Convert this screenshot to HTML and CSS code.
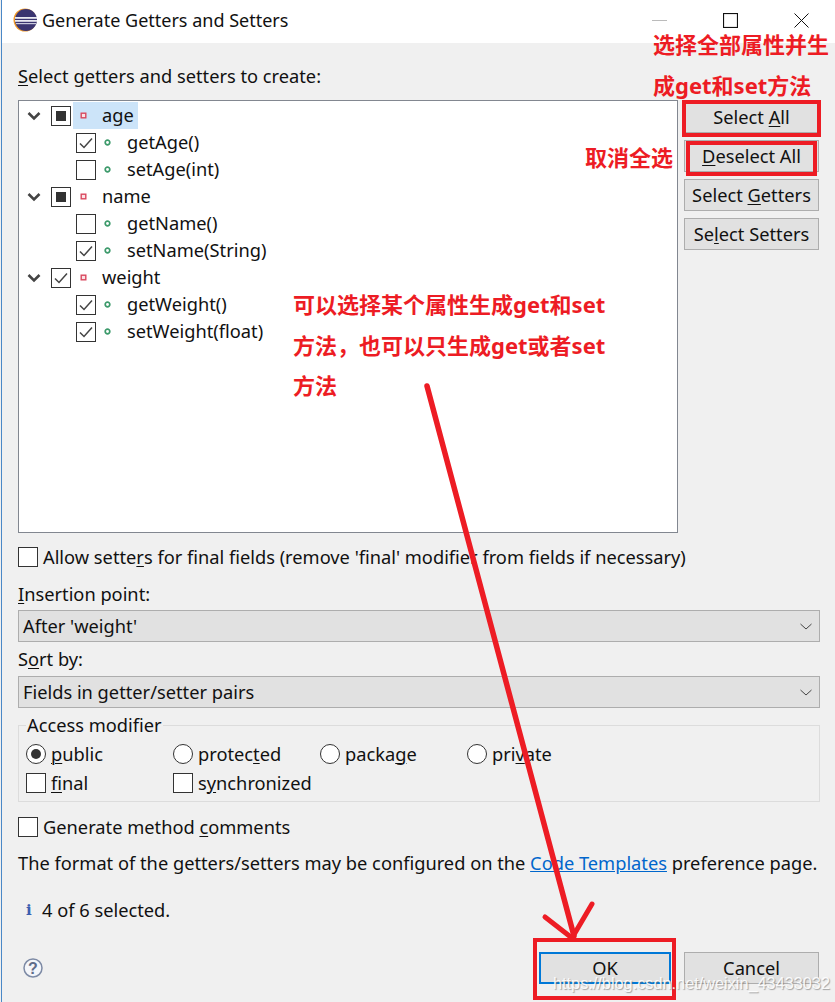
FILE: index.html
```html
<!DOCTYPE html>
<html lang="en">
<head>
<meta charset="utf-8">
<title>Generate Getters and Setters</title>
<link rel="stylesheet" href="styles.css">
</head>
<body>
<svg class="defs" width="0" height="0" aria-hidden="true">
  <symbol id="tick" viewBox="0 0 20 20"><path d="M4 10.5 L8 14.5 L16 5.5" fill="none" stroke="#444" stroke-width="1.5"/></symbol>
  <symbol id="chev" viewBox="0 0 14 10"><path d="M1.5 2 L7 7.5 L12.5 2" fill="none" stroke="#444" stroke-width="2.6"/></symbol>
  <symbol id="field" viewBox="0 0 7 7"><rect x="1.200" y="1.200" width="4.600" height="4.600" fill="#fbe3e6" stroke="#d9485f" stroke-width="1.400"/></symbol>
  <symbol id="method" viewBox="0 0 7 7"><circle cx="3.5" cy="3.5" r="2.3" fill="#fff" stroke="#3d9a6b" stroke-width="1.7"/></symbol>
  <symbol id="combo" viewBox="0 0 12 7"><path d="M.5 1 L6 6 L11.500 1" fill="none" stroke="#444" stroke-width="1"/></symbol>
</svg>
<div class="window">
  <header class="titlebar">
    <svg class="logo" viewBox="0 0 24 24" width="24" height="24">
      <circle cx="12" cy="12" r="11.500" fill="#f09a2a"/>
      <circle cx="13" cy="12" r="11" fill="#3a3470"/>
      <rect x="2" y="9" width="22" height="1.800" fill="#e8e8f0"/>
      <rect x="2" y="12" width="22" height="1.800" fill="#e8e8f0"/>
      <rect x="3" y="15" width="20" height="1.200" fill="#c8c8dc"/>
    </svg>
    <span class="title">Generate Getters and Setters</span>
    <div class="controls">
      <svg class="ctl" viewBox="0 0 15 15" width="15" height="15"><path d="M0 7.500H15" stroke="#bbb" stroke-width="1"/></svg>
      <svg class="ctl" viewBox="0 0 15 15" width="15" height="15"><rect x=".5" y=".5" width="14" height="14" fill="none" stroke="#111" stroke-width="1.200"/></svg>
      <svg class="ctl" viewBox="0 0 15 15" width="15" height="15"><path d="M.5 .5L14.500 14.500M14.500 .5L.5 14.500" stroke="#111" stroke-width="1"/></svg>
    </div>
  </header>

  <main class="body">
    <div class="label top"><u>S</u>elect getters and setters to create:</div>
    <div class="picker">
      <div class="tree">
        <div class="row lvl0">
          <svg class="chev"><use href="#chev"/></svg><span class="cb partial"></span>
          <span class="sel"><svg class="ico"><use href="#field"/></svg><span class="name">age</span></span>
        </div>
        <div class="row lvl1"><span class="cb"><svg><use href="#tick"/></svg></span><svg class="ico"><use href="#method"/></svg><span class="name">getAge()</span></div>
        <div class="row lvl1"><span class="cb"></span><svg class="ico"><use href="#method"/></svg><span class="name">setAge(int)</span></div>
        <div class="row lvl0">
          <svg class="chev"><use href="#chev"/></svg><span class="cb partial"></span>
          <span class="sel plain"><svg class="ico"><use href="#field"/></svg><span class="name">name</span></span>
        </div>
        <div class="row lvl1"><span class="cb"></span><svg class="ico"><use href="#method"/></svg><span class="name">getName()</span></div>
        <div class="row lvl1"><span class="cb"><svg><use href="#tick"/></svg></span><svg class="ico"><use href="#method"/></svg><span class="name">setName(String)</span></div>
        <div class="row lvl0">
          <svg class="chev"><use href="#chev"/></svg><span class="cb"><svg><use href="#tick"/></svg></span>
          <span class="sel plain"><svg class="ico"><use href="#field"/></svg><span class="name">weight</span></span>
        </div>
        <div class="row lvl1"><span class="cb"><svg><use href="#tick"/></svg></span><svg class="ico"><use href="#method"/></svg><span class="name">getWeight()</span></div>
        <div class="row lvl1"><span class="cb"><svg><use href="#tick"/></svg></span><svg class="ico"><use href="#method"/></svg><span class="name">setWeight(float)</span></div>
      </div>
      <div class="side">
        <button class="btn">Select <u>A</u>ll</button>
        <button class="btn"><u>D</u>eselect All</button>
        <button class="btn">Select <u>G</u>etters</button>
        <button class="btn">Se<u>l</u>ect Setters</button>
      </div>
    </div>

    <label class="check allow"><span class="cb"></span><span>Allow sette<u>r</u>s for final fields (remove 'final' modifier from fields if necessary)</span></label>

    <div class="label ins"><u>I</u>nsertion point:</div>
    <div class="combo"><span>After 'weight'</span><svg class="arrow"><use href="#combo"/></svg></div>
    <div class="label sort">S<u>o</u>rt by:</div>
    <div class="combo"><span>Fields in getter/setter pairs</span><svg class="arrow"><use href="#combo"/></svg></div>

    <fieldset class="group">
      <legend>Access modifier</legend>
      <div class="grid">
        <span class="opt"><span class="radio on"></span><span><u>p</u>ublic</span></span>
        <span class="opt"><span class="radio"></span><span>protec<u>t</u>ed</span></span>
        <span class="opt"><span class="radio"></span><span>packa<u>g</u>e</span></span>
        <span class="opt"><span class="radio"></span><span>pri<u>v</u>ate</span></span>
        <span class="opt"><span class="cb"></span><span><u>f</u>inal</span></span>
        <span class="opt"><span class="cb"></span><span>s<u>y</u>nchronized</span></span>
      </div>
    </fieldset>

    <label class="check comments"><span class="cb"></span><span>Generate method <u>c</u>omments</span></label>
    <p class="format">The format of the getters/setters may be configured on the <a href="#">Code Templates</a> preference page.</p>
    <div class="status"><span class="info">i</span>4 of 6 selected.</div>

    <footer class="foot">
      <svg class="help" viewBox="0 0 20 20" width="20" height="20"><circle cx="10" cy="10" r="9" fill="#f4f6fa" stroke="#7d8aa5" stroke-width="1.500"/><text x="10" y="15.500" text-anchor="middle" class="q">?</text></svg>
      <div class="actions">
        <button class="btn wide default">OK</button>
        <button class="btn wide">Cancel</button>
      </div>
    </footer>
  </main>
</div>

<svg class="overlay" viewBox="0 0 835 1002" width="835" height="1002" aria-hidden="true">
  <g fill="none" stroke="#ed1c24" stroke-linecap="round" stroke-linejoin="round">
    <path d="M427 386 L574 936" stroke-width="5.500"/>
    <path d="M545 917 L572 938 L592 904" stroke-width="5"/>
  </g>
  <g fill="none" stroke="#ed1c24" stroke-width="4">
    <rect x="684" y="102" width="135" height="33"/>
    <rect x="688" y="143" width="127" height="31"/>
    <rect x="535" y="940" width="139" height="58"/>
  </g>
</svg>
<div class="note n1">选择全部属性并生<br>成get和set方法</div>
<div class="note n2">取消全选</div>
<div class="note n3">可以选择某个属性生成get和set<br>方法，也可以只生成get或者set<br>方法</div>
<div class="mark">https://blog.csdn.net/weixin_43433032</div>
</body>
</html>
```
FILE: styles.css
```css
* { box-sizing: border-box; }
html, body { margin: 0; padding: 0; }
body {
  width: 835px;
  height: 1002px;
  overflow: hidden;
  position: relative;
  background: #f0f0f0;
  color: #111;
  font: 18.250px/24px "Noto Sans", "Noto Sans CJK SC", sans-serif;
}
.defs { position: absolute; }
u { text-underline-offset: 2px; text-decoration-thickness: 1px; }

.window { margin-left: 1px; border-left: 1px solid #4a88c7; height: 1002px; }

.titlebar { height: 43px; background: #fff; display: flex; align-items: center; padding-left: 11px; }
.logo { flex: none; margin-top: -3px; }
.title { margin-left: 5px; margin-top: -3px; font-size: 18px; }
.controls { margin-left: auto; display: flex; gap: 56px; padding-right: 26px; margin-top: -3px; }
.ctl { display: block; }

.body { padding: 0 15px 0 16px; }
.label { height: 24px; }
.top { margin-top: 21px; }
.picker { display: flex; margin-top: 12px; gap: 6px; }
.tree { width: 660px; height: 433px; background: #fff; border: 1px solid #828790; padding-top: 1px; }
.row { height: 27px; display: flex; align-items: center; }
.lvl0 { padding-left: 8px; }
.lvl1 { padding-left: 57px; }
.name { margin-bottom: 2px; }
.chev { width: 14px; height: 10px; margin-right: 10px; flex: none; }
.cb { width: 20px; height: 20px; flex: none; border: 1px solid #333; background: #fff; display: block; position: relative; }
.cb svg { position: absolute; left: -1px; top: -1px; width: 20px; height: 20px; }
.partial::after { content: ""; position: absolute; left: 4px; top: 4px; width: 10px; height: 10px; background: #333; }
.ico { width: 7px; height: 7px; flex: none; }
.lvl1 .ico { margin-left: 8px; }
.lvl1 .name { margin-left: 16px; }
.sel { display: flex; align-items: center; height: 27px; width: 65px; margin-left: 2px; padding-left: 7px; background: #cce4f9; }
.sel.plain { background: none; }
.sel .name { margin-left: 15px; }

.side { display: flex; flex-direction: column; gap: 7px; width: 135px; padding-top: 1px; }
.btn {
  height: 32px;
  width: 135px;
  padding: 0;
  background: #e1e1e1;
  border: 1px solid #adadad;
  font: inherit;
  color: #111;
}

.check { display: flex; align-items: center; gap: 5px; }
.allow { margin-top: 12px; }
.ins { margin-top: 13px; }
.combo {
  height: 32px;
  margin-top: 4px;
  background: #e1e1e1;
  border: 1px solid #adadad;
  display: flex;
  align-items: center;
  justify-content: space-between;
  padding: 0 7px 0 4px;
}
.arrow { width: 12px; height: 7px; }
.sort { margin-top: 5px; height: 25px; }

.group { margin: 6px 0 0; padding: 0 7px; border: 1px solid #dcdcdc; height: 88px; border-radius: 0; }
.group legend { padding: 0 1px; margin-left: 0; line-height: 22px; }
.grid { display: grid; grid-template-columns: repeat(4, 147px); grid-auto-rows: 29px; margin-top: 3px; }
.opt { display: flex; align-items: center; gap: 5px; }
.radio { width: 20px; height: 20px; flex: none; border-radius: 50%; border: 1px solid #333; background: #fff; position: relative; }
.radio.on::after { content: ""; position: absolute; left: 4px; top: 4px; width: 10px; height: 10px; border-radius: 50%; background: #333; }

.comments { margin-top: 13px; }
.format { margin: 12px 0 0; white-space: nowrap; }
.format a { color: #0066cc; }
.status { margin-top: 23px; padding-left: 8px; display: flex; align-items: center; }
.info { width: 16px; color: #3c5fb0; font: bold 15px/20px "DejaVu Serif", serif; }
.foot { display: flex; align-items: center; justify-content: space-between; margin-top: 30px; }
.help { margin-left: 5px; }
.q { font: bold 16px "Liberation Sans", sans-serif; fill: #5f6d8a; }
.actions { display: flex; gap: 13px; padding-right: 1px; }
.wide.default { width: 132px; border: 2px solid #0078d7; }

.overlay { position: absolute; left: 0; top: 0; pointer-events: none; }
.note {
  position: absolute;
  color: #ed1c24;
  font: bold 22px/40.500px "Noto Sans", "Noto Sans CJK SC", sans-serif;
  white-space: nowrap;
}
.n1 { left: 653px; top: 24px; }
.n2 { left: 585px; top: 137px; }
.n3 { left: 293px; top: 284px; }
.mark {
  position: absolute;
  left: 553px;
  top: 972px;
  font: 16.300px/22px "Liberation Sans", sans-serif;
  color: rgba(255,255,255,.9);
  text-shadow: 1px 1px 1px rgba(110,110,110,.6);
  white-space: nowrap;
}
```
